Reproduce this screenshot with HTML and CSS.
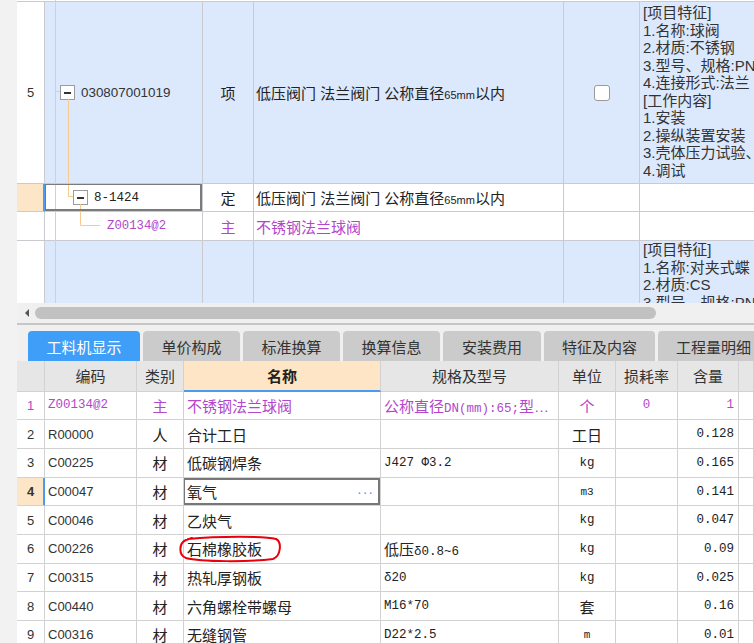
FILE: index.html
```html
<!DOCTYPE html>
<html lang="zh">
<head>
<meta charset="utf-8">
<title>工料机显示</title>
<link rel="stylesheet" href="styles.css">
</head>
<body>
<div class="app">
  <div class="upper">
    <div class="ugrid">
      <!-- row 5 -->
      <div class="u rn first">5</div>
      <div class="u tree first blue"><span class="tbox box1"></span><span class="code13">030807001019</span></div>
      <div class="u center first blue">项</div>
      <div class="u name first blue"><span>低压阀门 法兰阀门 公称直径<span class="mm">65mm</span>以内</span></div>
      <div class="u center first blue"><span class="check"></span></div>
      <div class="u feat first blue">
        <div>[项目特征]</div>
        <div>1.名称:球阀</div>
        <div>2.材质:不锈钢</div>
        <div>3.型号、规格:PN</div>
        <div>4.连接形式:法兰</div>
        <div>[工作内容]</div>
        <div>1.安装</div>
        <div>2.操纵装置安装</div>
        <div>3.壳体压力试验、</div>
        <div>4.调试</div>
      </div>
      <!-- row 8-1424 -->
      <div class="u rn peach selbar"></div>
      <div class="u tree selcell"><span class="tbox box2"></span><span class="mono">8-1424</span></div>
      <div class="u center">定</div>
      <div class="u name"><span>低压阀门 法兰阀门 公称直径<span class="mm">65mm</span>以内</span></div>
      <div class="u"></div>
      <div class="u"></div>
      <!-- row Z -->
      <div class="u rn"></div>
      <div class="u tree purple"><span class="mono zcode">Z00134@2</span></div>
      <div class="u center purple">主</div>
      <div class="u name purple">不锈钢法兰球阀</div>
      <div class="u"></div>
      <div class="u"></div>
      <!-- next row -->
      <div class="u rn"></div>
      <div class="u blue"></div>
      <div class="u blue"></div>
      <div class="u blue"></div>
      <div class="u blue"></div>
      <div class="u feat feat2 blue">
        <div>[项目特征]</div>
        <div>1.名称:对夹式蝶</div>
        <div>2.材质:CS</div>
        <div>3.型号、规格:PN</div>
      </div>
    </div>
    <svg class="treelines" width="120" height="303" viewBox="0 0 120 303">
      <g stroke="#f8ca8e" stroke-width="1" fill="none">
        <path d="M38.5 0 V303"/>
        <path d="M38.5 91.5 H43"/>
        <path d="M51.5 99 V196.5 H56"/>
        <path d="M63.5 204 V225.5 H83"/>
      </g>
    </svg>
  </div>

  <div class="hscroll">
    <span class="arrow"></span>
    <span class="thumb"></span>
  </div>
  <div class="sep"></div>

  <div class="tabbar">
    <div class="tab active w112">工料机显示</div>
    <div class="tab w97">单价构成</div>
    <div class="tab w97">标准换算</div>
    <div class="tab w97">换算信息</div>
    <div class="tab w98">安装费用</div>
    <div class="tab w111">特征及内容</div>
    <div class="tab w111">工程量明细</div>
  </div>

  <div class="lower">
    <div class="lgrid">
      <div class="l h"></div>
      <div class="l h">编码</div>
      <div class="l h">类别</div>
      <div class="l h hname">名称</div>
      <div class="l h">规格及型号</div>
      <div class="l h">单位</div>
      <div class="l h">损耗率</div>
      <div class="l h">含量</div>
      <div class="l h"></div>

      <div class="l num purple">1</div>
      <div class="l code purple"><span class="mono zsmall">Z00134@2</span></div>
      <div class="l center purple">主</div>
      <div class="l txt purple">不锈钢法兰球阀</div>
      <div class="l txt purple"><span>公称直径<span class="mono">DN(mm):65;</span>型…</span></div>
      <div class="l center purple">个</div>
      <div class="l center purple mono">0</div>
      <div class="l right purple mono">1</div>
      <div class="l"></div>

      <div class="l num">2</div>
      <div class="l code">R00000</div>
      <div class="l center">人</div>
      <div class="l txt">合计工日</div>
      <div class="l txt"></div>
      <div class="l center">工日</div>
      <div class="l"></div>
      <div class="l right mono">0.128</div>
      <div class="l"></div>

      <div class="l num">3</div>
      <div class="l code">C00225</div>
      <div class="l center">材</div>
      <div class="l txt">低碳钢焊条</div>
      <div class="l txt mono">J427 Φ3.2</div>
      <div class="l center mono">kg</div>
      <div class="l"></div>
      <div class="l right mono">0.165</div>
      <div class="l"></div>

      <div class="l num peach bold selbar">4</div>
      <div class="l code">C00047</div>
      <div class="l center">材</div>
      <div class="l txt editing"><span>氧气</span><span class="dots">···</span></div>
      <div class="l txt"></div>
      <div class="l center mono small">m3</div>
      <div class="l"></div>
      <div class="l right mono">0.141</div>
      <div class="l"></div>

      <div class="l num">5</div>
      <div class="l code">C00046</div>
      <div class="l center">材</div>
      <div class="l txt">乙炔气</div>
      <div class="l txt"></div>
      <div class="l center mono">kg</div>
      <div class="l"></div>
      <div class="l right mono">0.047</div>
      <div class="l"></div>

      <div class="l num">6</div>
      <div class="l code">C00226</div>
      <div class="l center">材</div>
      <div class="l txt">石棉橡胶板</div>
      <div class="l txt"><span>低压<span class="mono">δ0.8~6</span></span></div>
      <div class="l center mono">kg</div>
      <div class="l"></div>
      <div class="l right mono">0.09</div>
      <div class="l"></div>

      <div class="l num">7</div>
      <div class="l code">C00315</div>
      <div class="l center">材</div>
      <div class="l txt">热轧厚钢板</div>
      <div class="l txt mono">δ20</div>
      <div class="l center mono">kg</div>
      <div class="l"></div>
      <div class="l right mono">0.025</div>
      <div class="l"></div>

      <div class="l num">8</div>
      <div class="l code">C00440</div>
      <div class="l center">材</div>
      <div class="l txt">六角螺栓带螺母</div>
      <div class="l txt mono">M16*70</div>
      <div class="l center">套</div>
      <div class="l"></div>
      <div class="l right mono">0.16</div>
      <div class="l"></div>

      <div class="l num">9</div>
      <div class="l code">C00316</div>
      <div class="l center">材</div>
      <div class="l txt">无缝钢管</div>
      <div class="l txt mono">D22*2.5</div>
      <div class="l center mono small">m</div>
      <div class="l"></div>
      <div class="l right mono">0.01</div>
      <div class="l"></div>
    </div>
    <svg class="mark" width="108" height="32" viewBox="0 0 108 32">
      <path d="M11 6 C42 3, 87 3, 99 6 C105 9, 104 23, 96 26 C72 29, 24 29, 9 25 C1 22, 2 10, 9 7 L15 5" fill="none" stroke="#e8000b" stroke-width="2" stroke-linecap="round" stroke-linejoin="round"/>
    </svg>
  </div>
</div>
</body>
</html>
```

FILE: styles.css
```css
html, body {
  margin: 0;
  padding: 0;
}

.app {
  width: 754px;
  height: 643px;
  overflow: hidden;
  background: #f2f2f2;
  font-family: "Liberation Sans", "Noto Sans CJK SC", sans-serif;
  color: #222;
}

/* ---------- upper tree grid ---------- */
.upper {
  margin-left: 17px;
  height: 303px;
  padding-top: 1px;
  box-sizing: border-box;
  position: relative;
  overflow: hidden;
  background: #fff;
}

.ugrid {
  display: grid;
  grid-template-columns: 28px 158px 51px 310px 76px 200px;
  grid-template-rows: 183px 28px 29px 80px;
}

.u {
  box-sizing: border-box;
  border-right: 1px solid #c9cbd0;
  border-bottom: 1px solid #c9cbd0;
  display: flex;
  align-items: center;
  white-space: nowrap;
  overflow: hidden;
  font-size: 15px;
  background: #fff;
}

.u.first {
  border-top: 1px solid #c9cbd0;
}

.u.blue {
  background: #dce8fc;
}

.u.rn {
  justify-content: center;
  font-size: 13px;
  color: #333;
}

.u.center {
  justify-content: center;
}

.u.name {
  padding-left: 2px;
}

.mm {
  font-size: 11px;
}

.u.tree {
  position: relative;
}

.tbox {
  width: 15px;
  height: 15px;
  box-sizing: border-box;
  border: 1px solid #9c9c9c;
  background: #fff;
  position: relative;
  flex: none;
  margin-right: 6px;
}

.tbox::after {
  content: "";
  position: absolute;
  left: 3px;
  right: 3px;
  top: 6px;
  height: 1.5px;
  background: #333;
}

.box1 {
  margin-left: 15px;
}

.box2 {
  margin-left: 28px;
}

.code13 {
  font-size: 13.4px;
  color: #333;
}

.mono {
  font-family: "Liberation Mono", "Noto Sans CJK SC", monospace;
}

.u .mono {
  font-size: 12.5px;
}

.u .zcode {
  font-size: 12.3px;
  margin-left: 62px;
}

.purple {
  color: #b247cb;
}

.u.peach,
.l.peach {
  background: #fde6c8;
}

.selbar {
  border-right-color: #4a9cf0 !important;
  box-shadow: inset -1px 0 0 #4a9cf0;
}

.selcell::after {
  content: "";
  position: absolute;
  left: -1px;
  top: -1px;
  right: 0;
  bottom: 0;
  border: 2px solid #7a7a7a;
  z-index: 3;
}

.check {
  width: 16px;
  height: 16px;
  box-sizing: border-box;
  border: 1px solid #9a9a9a;
  border-radius: 3px;
  background: #fff;
}

.u.feat {
  flex-direction: column;
  align-items: flex-start;
  justify-content: flex-start;
  padding: 2px 0 0 3px;
  line-height: 17.5px;
  font-size: 15px;
  color: #333;
}

.u.feat2 {
  padding-top: 0;
}

.treelines {
  position: absolute;
  left: 0;
  top: 0;
  z-index: 2;
  pointer-events: none;
}

/* ---------- scrollbar ---------- */
.hscroll {
  margin-left: 17px;
  height: 20px;
  background: #f0f0f0;
  display: flex;
  align-items: center;
}

.arrow {
  width: 0;
  height: 0;
  margin-left: 8px;
  border-right: 4px solid #555;
  border-top: 4px solid transparent;
  border-bottom: 4px solid transparent;
}

.thumb {
  margin-left: 6px;
  width: 621px;
  height: 12px;
  border-radius: 6px;
  background: #c1c1c1;
}

.sep {
  margin-left: 17px;
  height: 2px;
  background: #c6c6c6;
}

/* ---------- tabs ---------- */
.tabbar {
  margin-left: 17px;
  height: 36px;
  box-sizing: border-box;
  padding: 6px 0 0 11px;
  display: flex;
  gap: 3px;
  background: #f0f0f0;
}

.tab {
  flex: none;
  height: 30px;
  border-radius: 4px 4px 0 0;
  background: #cbcbcb;
  color: #333;
  font-size: 15px;
  display: flex;
  align-items: center;
  justify-content: center;
}

.tab.active {
  background: #3f9ef7;
  color: #fff;
}

.w112 { width: 112px; }
.w97 { width: 97px; }
.w98 { width: 98px; }
.w111 { width: 111px; }

/* ---------- lower grid ---------- */
.lower {
  margin-left: 17px;
  position: relative;
}

.lgrid {
  display: grid;
  grid-template-columns: 28px 92px 47px 197px 178px 57px 62px 61px 1fr;
  grid-template-rows: 30.6px repeat(9, 28.7px);
  background: #fff;
}

.l {
  box-sizing: border-box;
  border-right: 1px solid #d2d2d2;
  border-bottom: 1px solid #d2d2d2;
  display: flex;
  align-items: center;
  white-space: nowrap;
  overflow: hidden;
  font-size: 15px;
  background: #fff;
  position: relative;
}

.l.h {
  background: #e6e6e6;
  justify-content: center;
  color: #333;
}

.l.h.hname {
  background: #fde5c6;
  font-weight: bold;
  color: #222;
  border-bottom: 2px solid #4a9cf0;
}

.l.num {
  justify-content: center;
  font-size: 13px;
  color: #333;
}

.l.num.purple {
  color: #b247cb;
}

.l.bold {
  font-weight: bold;
}

.l.code {
  padding-left: 3px;
  font-size: 13px;
  color: #333;
}

.l.code.purple {
  color: #b247cb;
}

.zsmall {
  font-size: 10.6px;
}

.l.center {
  justify-content: center;
}

.l.txt {
  padding-left: 3px;
}

.l.right {
  justify-content: flex-end;
  padding-right: 4px;
}

.l.mono,
.l .mono {
  font-size: 12.5px;
}

.l.small {
  font-size: 11px;
}

.l.editing::after {
  content: "";
  position: absolute;
  left: -1px;
  top: 0;
  right: 0;
  bottom: 0;
  border: 2px solid #777;
}

.dots {
  margin-left: auto;
  margin-right: 6px;
  color: #4a9cf0;
  font-size: 14px;
  letter-spacing: 1px;
}

.mark {
  position: absolute;
  left: 160px;
  top: 172px;
  pointer-events: none;
}
```
